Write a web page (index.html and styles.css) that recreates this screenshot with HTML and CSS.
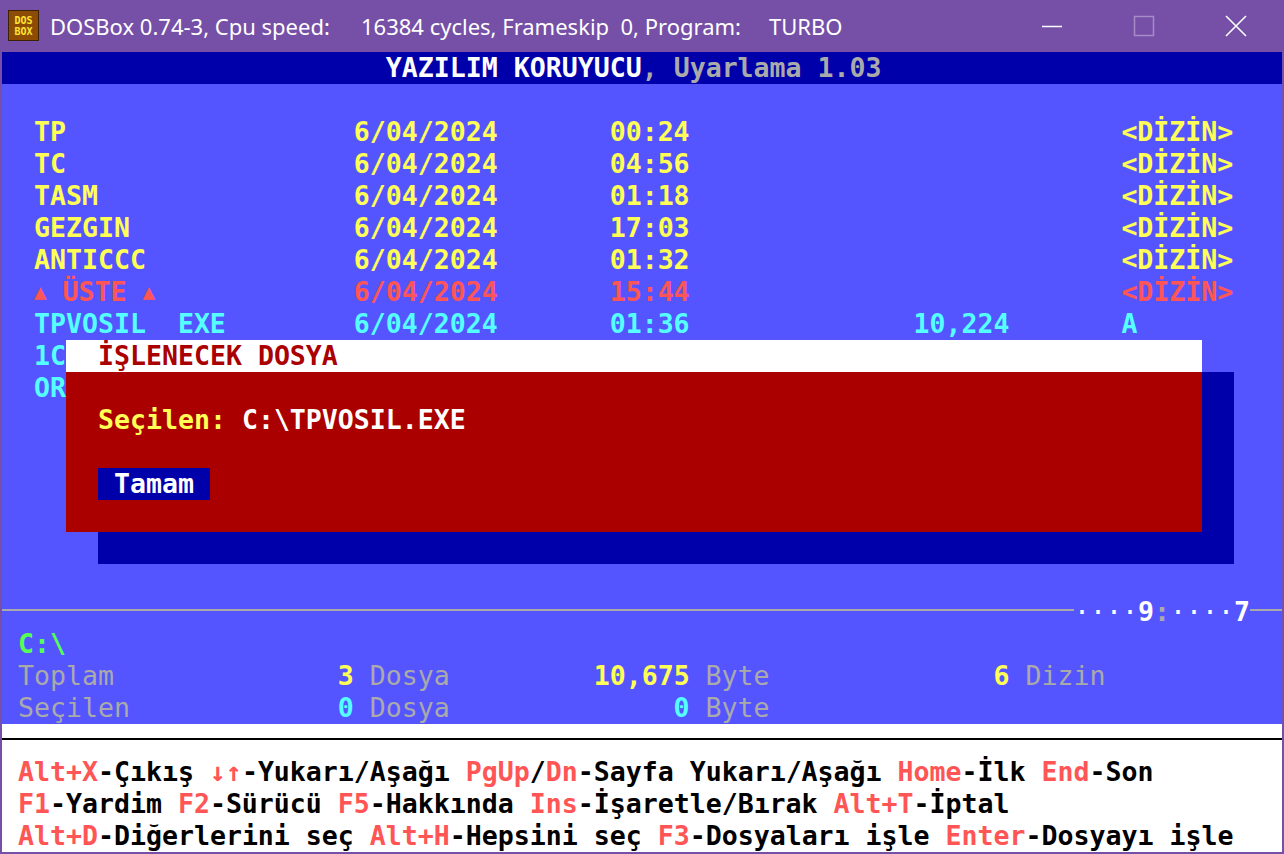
FILE: index.html
```html
<!DOCTYPE html>
<html lang="tr">
<head>
<meta charset="utf-8">
<title>DOSBox</title>
<link rel="stylesheet" href="styles.css">
</head>
<body>
<div class="window">
  <div class="titlebar">
    <div class="app-icon"><span>DOS</span><span>BOX</span></div>
    <div class="title-text"><span class="t1">DOSBox 0.74-3, Cpu speed:</span><span class="t2">16384 cycles, Frameskip  0, Program:</span><span class="t3">TURBO</span></div>
    <div class="controls">
      <div class="cbtn"><svg width="22" height="22" viewBox="0 0 22 22"><line x1="1" y1="11.5" x2="21" y2="11.5" stroke="#fff" stroke-width="1.5"/></svg></div>
      <div class="cbtn"><svg width="22" height="22" viewBox="0 0 22 22"><rect x="1.5" y="1.5" width="19" height="19" fill="none" stroke="#a68bc8" stroke-width="1.5"/></svg></div>
      <div class="cbtn"><svg width="22" height="22" viewBox="0 0 22 22"><path d="M1 1 L21 21 M21 1 L1 21" stroke="#fff" stroke-width="1.6"/></svg></div>
    </div>
  </div>
  <div class="screen">
    <div class="row header"><span class="c-white">YAZILIM KORUYUCU</span><span class="c-gray">, Uyarlama 1.03</span></div>
    <div class="files">
      <div class="file c-yellow"><span>TP</span><span>6/04/2024</span><span>00:24</span><span class="size"></span><span class="attr">&lt;DİZİN&gt;</span></div>
      <div class="file c-yellow"><span>TC</span><span>6/04/2024</span><span>04:56</span><span class="size"></span><span class="attr">&lt;DİZİN&gt;</span></div>
      <div class="file c-yellow"><span>TASM</span><span>6/04/2024</span><span>01:18</span><span class="size"></span><span class="attr">&lt;DİZİN&gt;</span></div>
      <div class="file c-yellow"><span>GEZGIN</span><span>6/04/2024</span><span>17:03</span><span class="size"></span><span class="attr">&lt;DİZİN&gt;</span></div>
      <div class="file c-yellow"><span>ANTICCC</span><span>6/04/2024</span><span>01:32</span><span class="size"></span><span class="attr">&lt;DİZİN&gt;</span></div>
      <div class="file c-lred"><span><span class="tri">▲</span> ÜSTE <span class="tri">▲</span></span><span>6/04/2024</span><span>15:44</span><span class="size"></span><span class="attr">&lt;DİZİN&gt;</span></div>
      <div class="file c-cyan"><span><span class="base">TPVOSIL</span>EXE</span><span>6/04/2024</span><span>01:36</span><span class="size">10,224</span><span class="attr">A</span></div>
      <div class="file c-cyan"><span>1C</span></div>
      <div class="file c-cyan"><span>OR</span></div>
    </div>
    <div class="divider"><span class="line"></span><span class="clock"><span class="dots">····</span><span class="c-white">9</span><span class="c-gray">:</span><span class="dots">····</span><span class="c-white">7</span></span><span class="line end"></span></div>
    <div class="row path c-green">C:\</div>
    <div class="stats">
      <div class="stat-row"><span class="label">Toplam</span><span class="grp g1"><span class="num c-yellow">3</span> Dosya</span><span class="grp g2"><span class="num c-yellow">10,675</span> Byte</span><span class="grp"><span class="num c-yellow">6</span> Dizin</span></div>
      <div class="stat-row"><span class="label">Seçilen</span><span class="grp g1"><span class="num c-cyan">0</span> Dosya</span><span class="grp g2"><span class="num c-cyan">0</span> Byte</span></div>
    </div>
    <div class="footer">
      <div class="row rule"></div>
      <div class="row keys"><span class="k">Alt+X</span>-Çıkış <span class="k">↓↑</span>-Yukarı/Aşağı <span class="k">PgUp</span>/<span class="k">Dn</span>-Sayfa Yukarı/Aşağı <span class="k">Home</span>-İlk <span class="k">End</span>-Son</div>
      <div class="row keys"><span class="k">F1</span>-Yardim <span class="k">F2</span>-Sürücü <span class="k">F5</span>-Hakkında <span class="k">Ins</span>-İşaretle/Bırak <span class="k">Alt+T</span>-İptal</div>
      <div class="row keys"><span class="k">Alt+D</span>-Diğerlerini seç <span class="k">Alt+H</span>-Hepsini seç <span class="k">F3</span>-Dosyaları işle <span class="k">Enter</span>-Dosyayı işle</div>
    </div>
    <div class="dialog">
      <div class="dlg-title">İŞLENECEK DOSYA</div>
      <div class="dlg-body">
        <div class="row"><span class="c-yellow">Seçilen:</span><span class="c-white"> C:\TPVOSIL.EXE</span></div>
        <div class="row"><span class="btn"> Tamam </span></div>
      </div>
    </div>
  </div>
</div>
</body>
</html>
```

FILE: styles.css
```css
* { box-sizing: border-box; margin: 0; padding: 0; }
html, body { width: 1284px; height: 854px; overflow: hidden; background: #7650a6; }

.window {
  width: 1284px;
  height: 854px;
  background: #7650a6;
  display: flex;
  flex-direction: column;
  padding: 0 2px 2px 2px;
}

.titlebar {
  height: 52px;
  flex: 0 0 52px;
  display: flex;
  align-items: center;
  color: #fff;
  font-family: "Noto Sans", "Open Sans", sans-serif;
  font-size: 22px;
  padding-bottom: 1px;
}
.app-icon {
  width: 31px;
  height: 31px;
  margin-left: 6px;
  margin-right: 11px;
  background: #8c4c06;
  border: 1px solid #3c2204;
  display: flex;
  flex-direction: column;
  align-items: center;
  justify-content: center;
  font-family: "DejaVu Sans Mono", monospace;
  font-weight: bold;
  font-size: 10px;
  line-height: 11px;
  color: #ffe433;
}
.title-text { flex: 1; display: flex; }
.title-text span { white-space: pre; }
.title-text .t1 { width: 311px; }
.title-text .t2 { width: 408px; }

.controls { display: flex; height: 52px; }
.cbtn {
  width: 92px;
  height: 52px;
  display: flex;
  align-items: center;
  justify-content: center;
}

.screen {
  position: relative;
  width: 1280px;
  height: 800px;
  flex: 0 0 800px;
  background: #5555ff;
  font-family: "DejaVu Sans Mono", monospace;
  font-size: 26.576px;
  font-weight: bold;
  line-height: 32px;
  color: #aaaaaa;
  overflow: hidden;
}

.row { height: 32px; white-space: pre; }
.header { background: #0000aa; padding-left: 24ch; }

.c-white { color: #ffffff; }
.c-gray { color: #aaaaaa; }
.c-yellow { color: #ffff55; }
.c-cyan { color: #55ffff; }
.c-lred { color: #ff5555; }
.c-green { color: #55ff55; }

.files { height: 512px; padding-top: 32px; }
.file {
  display: grid;
  grid-template-columns: 20ch 16ch 14ch 11ch 7ch 10ch;
  padding-left: 2ch;
  height: 32px;
}
.file > span { white-space: pre; }
.file .size { text-align: right; }
.file .attr { grid-column: 6; }
.base { display: inline-block; width: 9ch; }
.tri { display: inline-block; width: 1ch; font-size: 21px; text-align: center; vertical-align: top; }

.divider { height: 32px; display: flex; }
.divider .line { flex: 1; position: relative; }
.divider .line::before {
  content: "";
  position: absolute;
  left: 0;
  right: 0;
  top: 13px;
  height: 2px;
  background: #aaaaaa;
}
.divider .line.end { flex: 0 0 2ch; }
.clock { white-space: pre; }
.dots { color: #ffffff; font-weight: normal; }

.path { padding-left: 1ch; }

.stats { height: 64px; }
.stat-row { height: 32px; display: flex; padding-left: 1ch; font-weight: normal; }
.stat-row span { white-space: pre; }
.stat-row .label { width: 20ch; }
.stat-row .num { font-weight: bold; }
.grp.g1 { width: 16ch; }
.grp.g2 { width: 25ch; }
.g2 .num { display: inline-block; width: 6ch; text-align: right; }

.footer { background: #ffffff; color: #000000; height: 128px; }
.rule { position: relative; }
.rule::before {
  content: "";
  position: absolute;
  left: 0;
  right: 0;
  top: 14px;
  height: 2px;
  background: #000000;
}
.keys { padding-left: 1ch; }
.k { color: #ff5555; }

.dialog {
  position: absolute;
  left: 64px;
  top: 288px;
  width: 1136px;
  height: 192px;
  background: #aa0000;
  box-shadow: 32px 32px 0 #0000aa;
  display: flex;
  flex-direction: column;
}
.dlg-title {
  height: 32px;
  background: #ffffff;
  color: #aa0000;
  padding-left: 2ch;
  white-space: pre;
}
.dlg-body {
  padding: 32px 0 0 2ch;
  display: flex;
  flex-direction: column;
  gap: 32px;
}
.btn { background: #0000aa; color: #ffffff; display: inline-block; height: 32px; }
```
